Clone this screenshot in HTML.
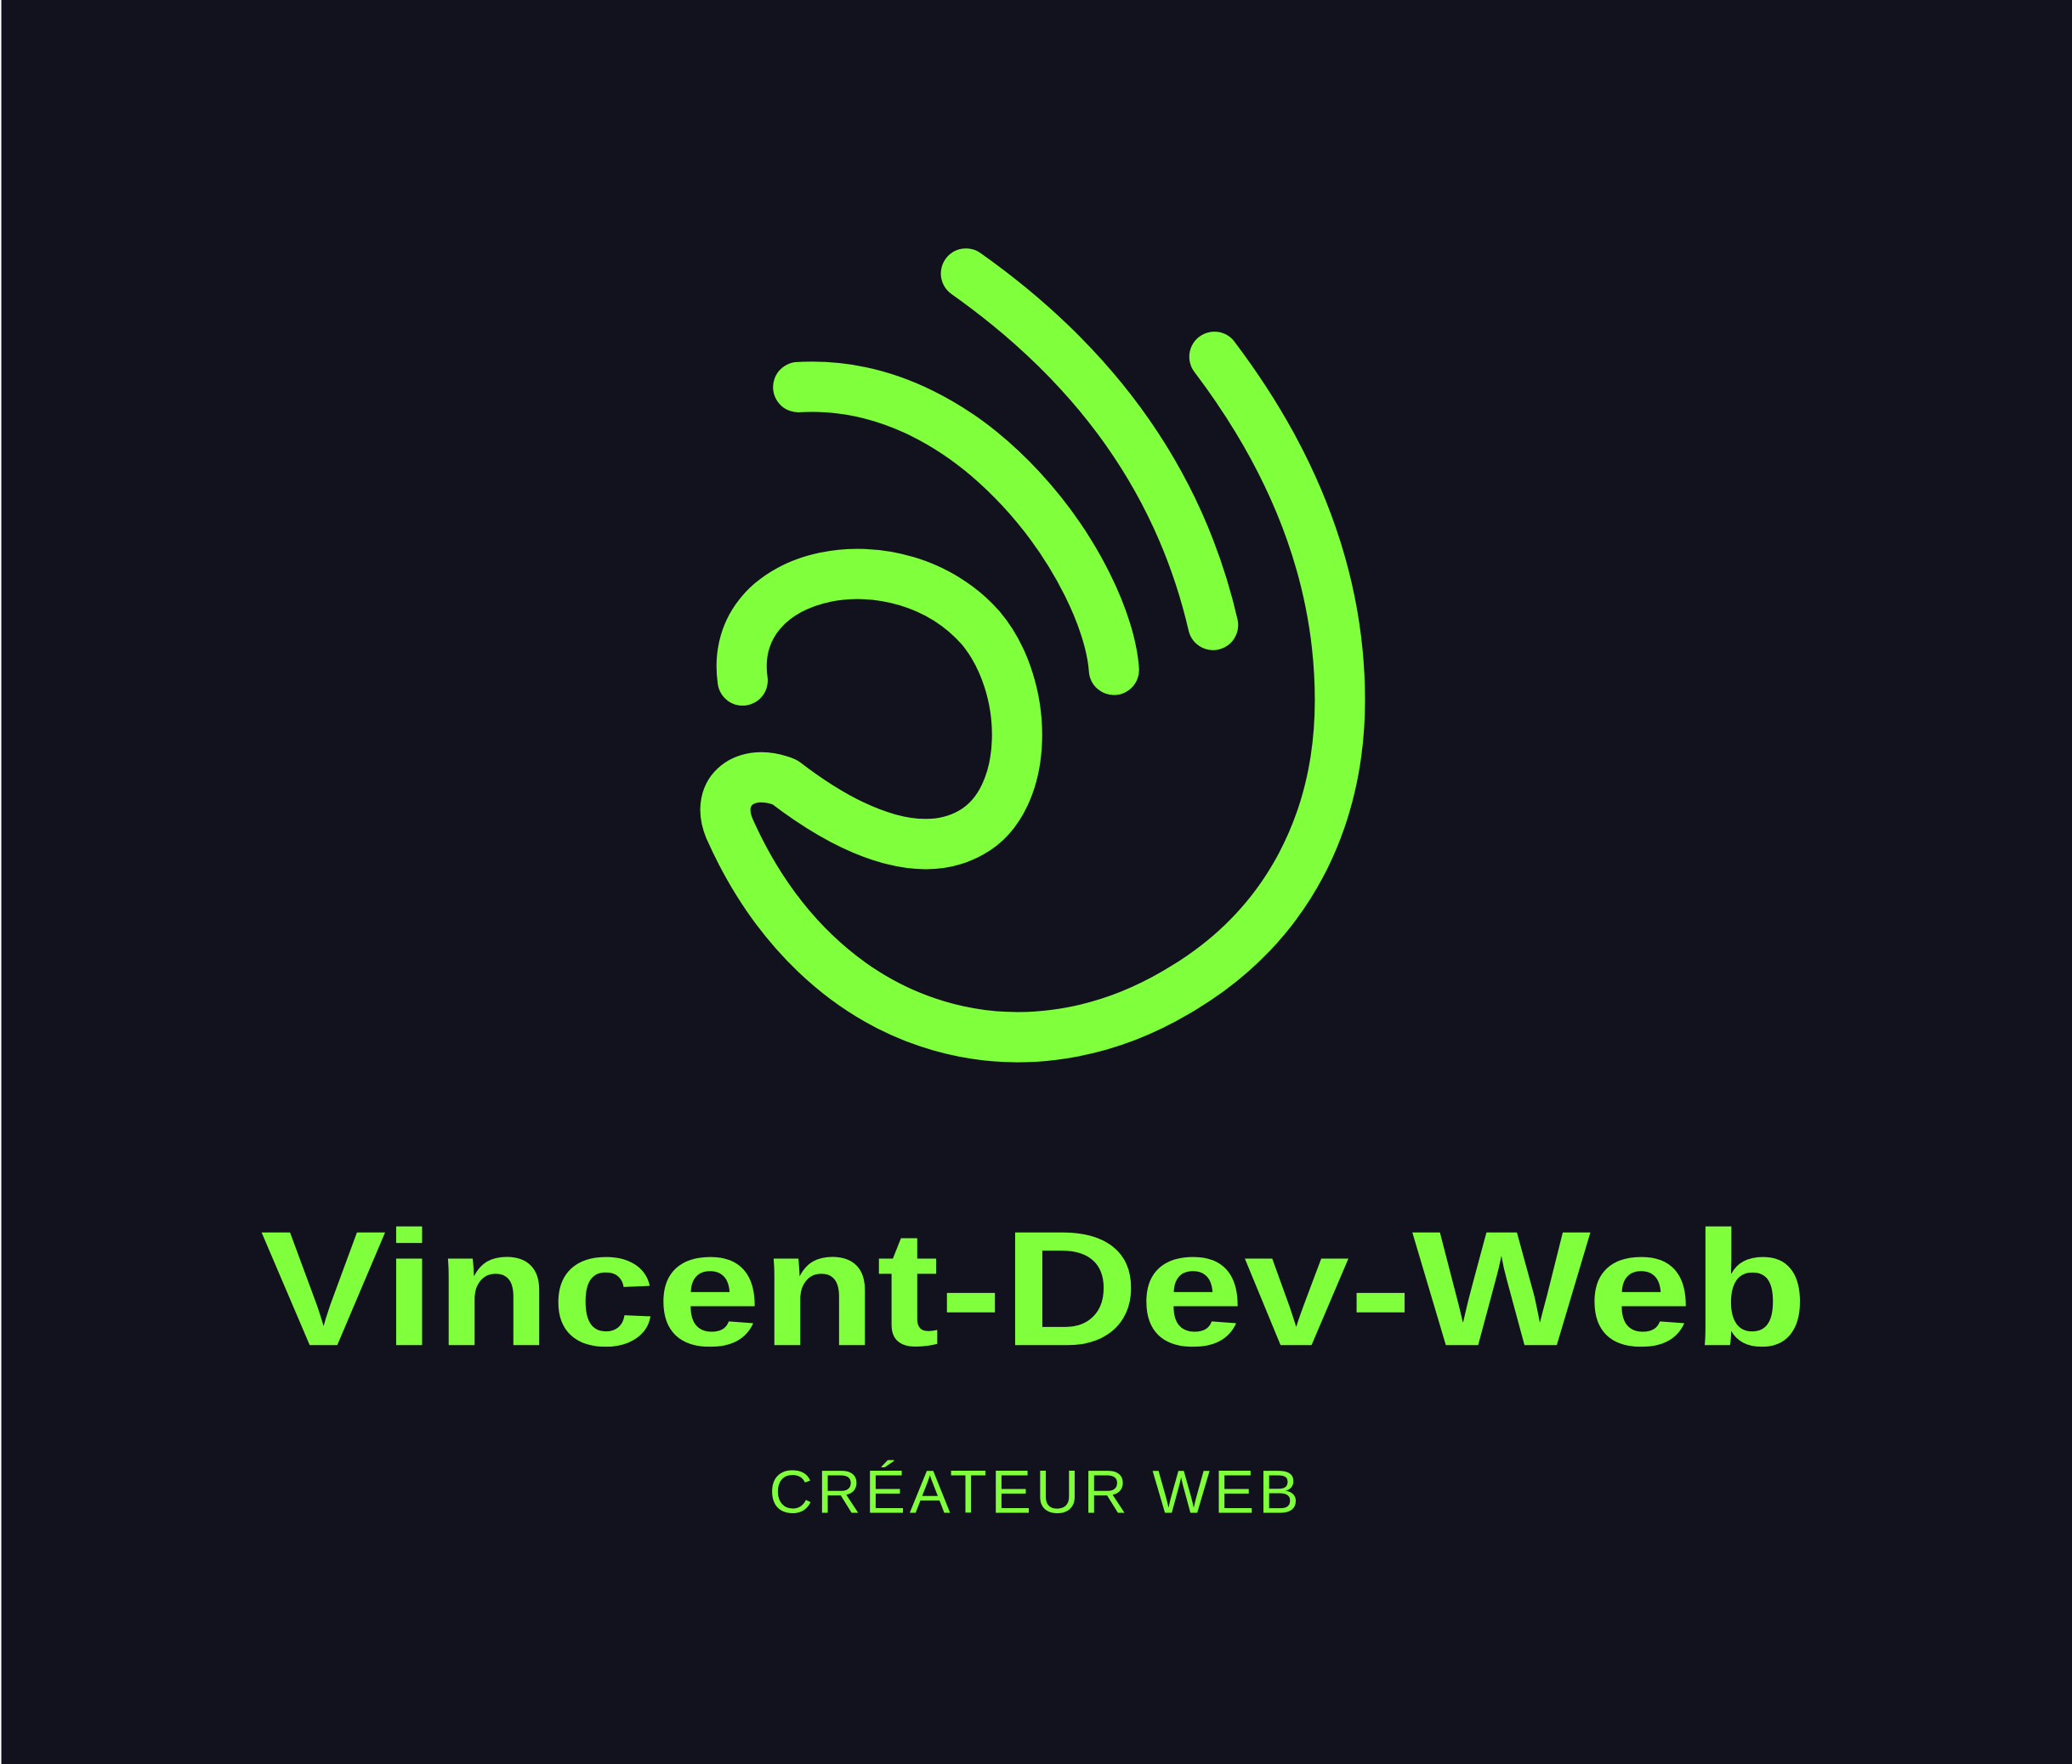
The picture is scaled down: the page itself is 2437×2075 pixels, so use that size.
<!DOCTYPE html>
<html><head><meta charset="utf-8"><style>
html,body{margin:0;padding:0;background:#12121f;}
svg{display:block;}
</style></head><body>
<svg width="2437" height="2075" viewBox="0 0 1568 1335" xmlns="http://www.w3.org/2000/svg" preserveAspectRatio="none">
<rect width="1568" height="1335" fill="#12121f"/>
<rect x="0" y="0" width="1" height="1335" fill="#ffffff"/>
<g fill="none" stroke="#80ff3c" stroke-width="38" stroke-linecap="round" stroke-linejoin="round">
<path d="M731,207 C830,277 893,365 918,473"/>
<path d="M604,293 C740,285 838,435 843,507"/>
<path d="M919,270 C1000,377 1014,470 1014,530 C1014,620 975,700 895,748 C770,825 620,780 552,627 C540,598 565,580 594,592 C650,635 700,650 735,630 C780,605 780,520 742,475 C680,405 550,430 562,515"/>
</g>
<text x="197" y="1018" textLength="1171" lengthAdjust="spacingAndGlyphs" font-family="Liberation Sans, sans-serif" font-weight="bold" font-size="124" fill="#80ff3c">Vincent-Dev-Web</text>
<text x="582" y="1145" textLength="401" lengthAdjust="spacing" font-family="Liberation Sans, sans-serif" font-size="46" fill="#80ff3c">CRÉATEUR WEB</text>
</svg>
</body></html>
